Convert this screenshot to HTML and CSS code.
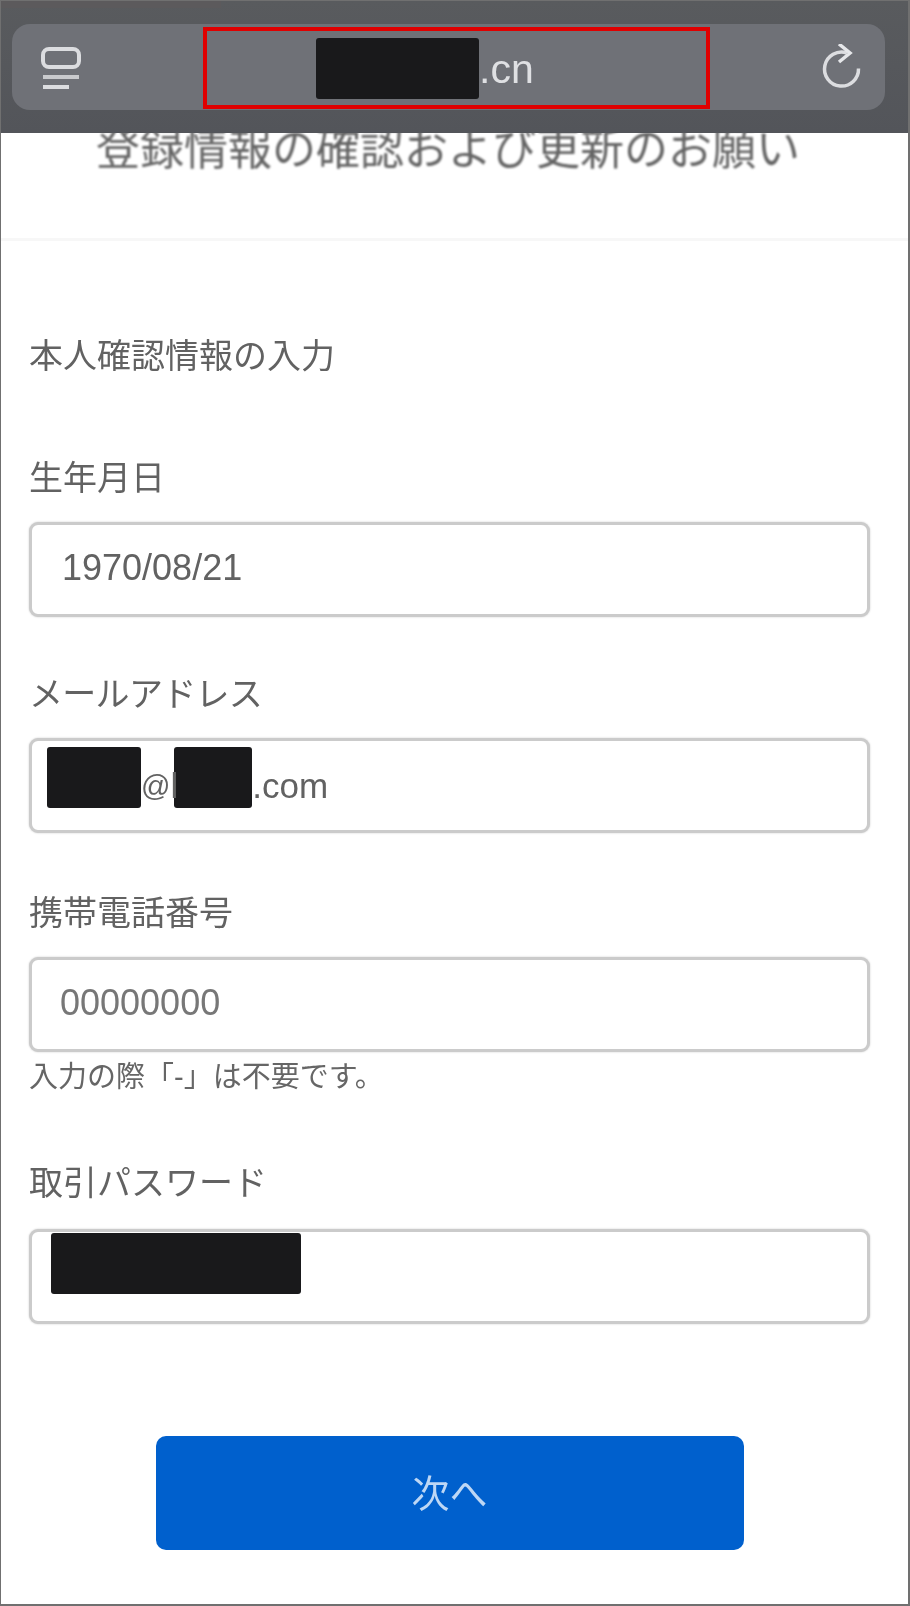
FILE: index.html
```html
<!DOCTYPE html>
<html lang="ja">
<head>
<meta charset="utf-8">
<title>登録情報の確認および更新のお願い</title>
<link rel="stylesheet" href="styles.css">
</head>
<body>
<div class="frame">
  <div class="browser">
    <div class="status-strip"></div>
    <div class="pill">
      <svg class="tabs-icon" viewBox="0 0 40 46" width="40" height="46" aria-hidden="true">
        <rect x="2" y="5" width="36" height="18" rx="6" fill="none" stroke="#dcdde0" stroke-width="4"/>
        <path d="M2 33H38" stroke="#c9cacd" stroke-width="4" fill="none"/>
        <path d="M2 43H28" stroke="#dcdde0" stroke-width="4" fill="none"/>
      </svg>
      <div class="url-box">
        <div class="url"><span class="mask mask-url"></span><span class="url-tld">.cn</span></div>
      </div>
      <svg class="reload-icon" viewBox="0 0 40 46" width="40" height="46" aria-hidden="true">
        <path d="M37.500 24.500A17 17 0 1 1 26 9" fill="none" stroke="#dcdde0" stroke-width="3.500"/>
        <path d="M18 0L29 9L18 18" fill="none" stroke="#e6e7ea" stroke-width="3.500"/>
      </svg>
    </div>
  </div>

  <main class="page">
    <h1 class="title">登録情報の確認および更新のお願い</h1>
    <hr class="divider">
    <form class="form">
      <h2 class="section">本人確認情報の入力</h2>

      <div class="field field-birth">
        <div class="label">生年月日</div>
        <div class="input"><span class="value value-digits">1970/08/21</span></div>
      </div>

      <div class="field field-mail">
        <div class="label label-tight">メールアドレス</div>
        <div class="input input-masked">
          <span class="mask mask-mail-a"></span><span class="value value-at">@</span><span class="value">l</span><span class="mask mask-mail-b"></span><span class="value">.com</span>
        </div>
      </div>

      <div class="field field-tel">
        <div class="label">携帯電話番号</div>
        <div class="input"><span class="value value-digits value-muted">00000000</span></div>
        <p class="hint">入力の際「-」は不要です。</p>
      </div>

      <div class="field field-pass">
        <div class="label">取引パスワード</div>
        <div class="input input-pass"><span class="mask mask-pass"></span></div>
      </div>

      <div class="actions"><button type="button" class="next"><span class="next-text">次へ</span></button></div>
    </form>
  </main>
</div>
</body>
</html>
```
FILE: styles.css
```css
* { box-sizing: border-box; }
html, body { margin: 0; padding: 0; background: #fff; }
body {
  width: 910px;
  height: 1606px;
  overflow: hidden;
  font-family: "Liberation Sans", "Noto Sans CJK JP", sans-serif;
}
.frame {
  position: relative;
  width: 910px;
  height: 1606px;
  overflow: hidden;
  border: 1px solid #707070;
  border-right-width: 2px;
  border-bottom-width: 2px;
  background: #fff;
}
.browser {
  position: absolute;
  top: -1px;
  left: -1px;
  right: -2px;
  height: 133px;
  padding: 24px 25px 0 12px;
  background: linear-gradient(#595b5e, #53555a);
  z-index: 2;
}
.status-strip {
  position: absolute;
  top: 1px;
  left: 1px;
  width: 220px;
  height: 7px;
  background: #5c5a5c;
}
.pill {
  position: relative;
  display: flex;
  align-items: center;
  justify-content: space-between;
  height: 86px;
  padding: 0 24px 0 29px;
  border-radius: 18px;
  background: #6f7177;
  filter: blur(.5px);
}
.tabs-icon { display: block; }
.reload-icon { display: block; }
.url-box {
  position: absolute;
  left: 191px;
  top: 3px;
  width: 507px;
  height: 82px;
  border: 4px solid #e00000;
}
.url {
  display: flex;
  align-items: center;
  height: 100%;
  padding-left: 109px;
}
.url-tld {
  font-size: 41px;
  line-height: 1;
  color: #dfe0e3;
  margin-top: 2px;
}
.mask {
  display: block;
  flex: none;
  background: #19191b;
  border-radius: 3px;
}
.mask-url { width: 163px; height: 61px; }

.page { padding: 123px 0 0; color: #6a6a6a; }
.title {
  margin: 0;
  padding-left: 95px;
  font-size: 44px;
  line-height: 52px;
  font-weight: 400;
  white-space: nowrap;
  color: #646464;
  filter: blur(.8px);
}
.divider {
  height: 3px;
  margin: 62px 0 0;
  border: 0;
  background: #f7f7f7;
}
.form { padding: 0 38px 0 28px; }
.section {
  margin: 93px 0 0;
  font-size: 34px;
  line-height: 44px;
  font-weight: 400;
  color: #626262;
  filter: blur(.6px);
}
.label {
  font-size: 34px;
  line-height: 44px;
  color: #626262;
  white-space: nowrap;
  filter: blur(.6px);
}
.label-tight { letter-spacing: -.7px; }
.field-birth { margin-top: 78px; }
.field-mail { margin-top: 55px; }
.field-tel { margin-top: 58px; }
.field-pass { margin-top: 66px; }
.input {
  display: flex;
  align-items: center;
  height: 95px;
  margin-top: 22px;
  padding-left: 30px;
  border: 3px solid #cbcbcb;
  border-radius: 9px;
  background: #fff;
  box-shadow: 0 0 2px #c8c8c8;
}
.input-masked { padding-left: 15px; }
.input-pass { position: relative; margin-top: 24px; }
.value {
  font-size: 35px;
  line-height: 44px;
  color: #626262;
  white-space: nowrap;
  filter: blur(.7px);
}
.value-digits { font-size: 36px; margin-top: -4px; }
.value-at { font-size: 29px; }
.value-muted { color: #777; margin-left: -2px; }
.mask-mail-a { width: 94px; height: 61px; margin-top: -17px; }
.mask-mail-b { width: 78px; height: 61px; margin-top: -17px; margin-left: -4px; }
.mask-pass {
  position: absolute;
  left: 19px;
  top: 1px;
  width: 250px;
  height: 61px;
}
.hint {
  margin: 7px 0 0;
  font-size: 29px;
  line-height: 36px;
  color: #666;
  white-space: nowrap;
  filter: blur(.7px);
}
.actions { display: flex; justify-content: center; margin-top: 112px; }
.next {
  display: block;
  width: 588px;
  height: 114px;
  padding: 0 0 6px;
  border: 0;
  border-radius: 10px;
  background: #0060cd;
  font-family: inherit;
  font-size: 38px;
  color: #bdd7f5;
  filter: blur(.6px);
}
```
